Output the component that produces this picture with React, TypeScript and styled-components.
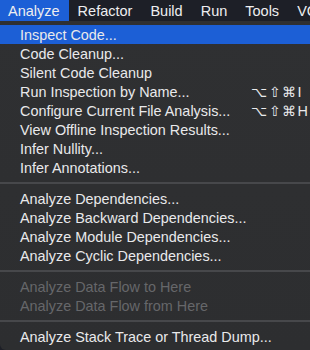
import styled, { createGlobalStyle } from "styled-components";

const GlobalStyle = createGlobalStyle`
  html, body {
    margin: 0;
    padding: 0;
    background: #1d1f27;
    overflow: hidden;
  }
  body {
    font-family: "Liberation Sans", Arial, sans-serif;
    -webkit-font-smoothing: antialiased;
  }
`;

const Screen = styled.div`
  width: 310px;
  height: 350px;
  display: flex;
  flex-direction: column;
  overflow: hidden;
`;

const MenuBar = styled.div`
  display: flex;
  height: 21px;
  background: #1d1f27;
  flex-shrink: 0;
`;

const BarItem = styled.div<{ $active?: boolean }>`
  display: flex;
  align-items: center;
  padding: 0 9px 0 8px;
  margin-right: 1px;
  font-size: 14.5px;
  color: #eeeef0;
  white-space: nowrap;
  background: ${(p) => (p.$active ? "#1c5fd6" : "transparent")};
`;

const Dropdown = styled.div`
  flex: 1;
  display: flex;
  flex-direction: column;
  padding: 4px 0;
  background: linear-gradient(180deg, #2f3032 0%, #2d2e30 100%);
  border-bottom-left-radius: 6px;
  margin-right: -20px;
`;

const Item = styled.div<{ $active?: boolean; $disabled?: boolean }>`
  display: flex;
  align-items: center;
  justify-content: space-between;
  height: 19px;
  padding: 0 24px 0 20px;
  font-size: 14.4px;
  white-space: nowrap;
  color: ${(p) => (p.$disabled ? "#66676a" : "#e9e9eb")};
  background: ${(p) => (p.$active ? "#1c5fd6" : "transparent")};
`;

const Shortcut = styled.span`
  width: 55px;
  letter-spacing: 1.5px;
  color: #e9e9eb;
`;

const Separator = styled.div`
  height: 12px;
  display: flex;
  align-items: center;

  &::after {
    content: "";
    flex: 1;
    height: 2px;
    background: #47484b;
  }
`;

type Entry = { label: string; keys?: string; active?: boolean; disabled?: boolean } | "sep";

const entries: Entry[] = [
  { label: "Inspect Code...", active: true },
  { label: "Code Cleanup..." },
  { label: "Silent Code Cleanup" },
  { label: "Run Inspection by Name...", keys: "⌥⇧⌘I" },
  { label: "Configure Current File Analysis...", keys: "⌥⇧⌘H" },
  { label: "View Offline Inspection Results..." },
  { label: "Infer Nullity..." },
  { label: "Infer Annotations..." },
  "sep",
  { label: "Analyze Dependencies..." },
  { label: "Analyze Backward Dependencies..." },
  { label: "Analyze Module Dependencies..." },
  { label: "Analyze Cyclic Dependencies..." },
  "sep",
  { label: "Analyze Data Flow to Here", disabled: true },
  { label: "Analyze Data Flow from Here", disabled: true },
  "sep",
  { label: "Analyze Stack Trace or Thread Dump..." },
];

const menus = ["Analyze", "Refactor", "Build", "Run", "Tools", "VCS"];

const App = () => {
  return (
    <Screen>
      <GlobalStyle />
      <MenuBar>
        {menus.map((m, i) => (
          <BarItem key={m} $active={i === 0}>
            {m}
          </BarItem>
        ))}
      </MenuBar>
      <Dropdown>
        {entries.map((e, i) =>
          e === "sep" ? (
            <Separator key={i} />
          ) : (
            <Item key={i} $active={e.active} $disabled={e.disabled}>
              <span>{e.label}</span>
              {e.keys && <Shortcut>{e.keys}</Shortcut>}
            </Item>
          )
        )}
      </Dropdown>
    </Screen>
  );
};

export default App;
